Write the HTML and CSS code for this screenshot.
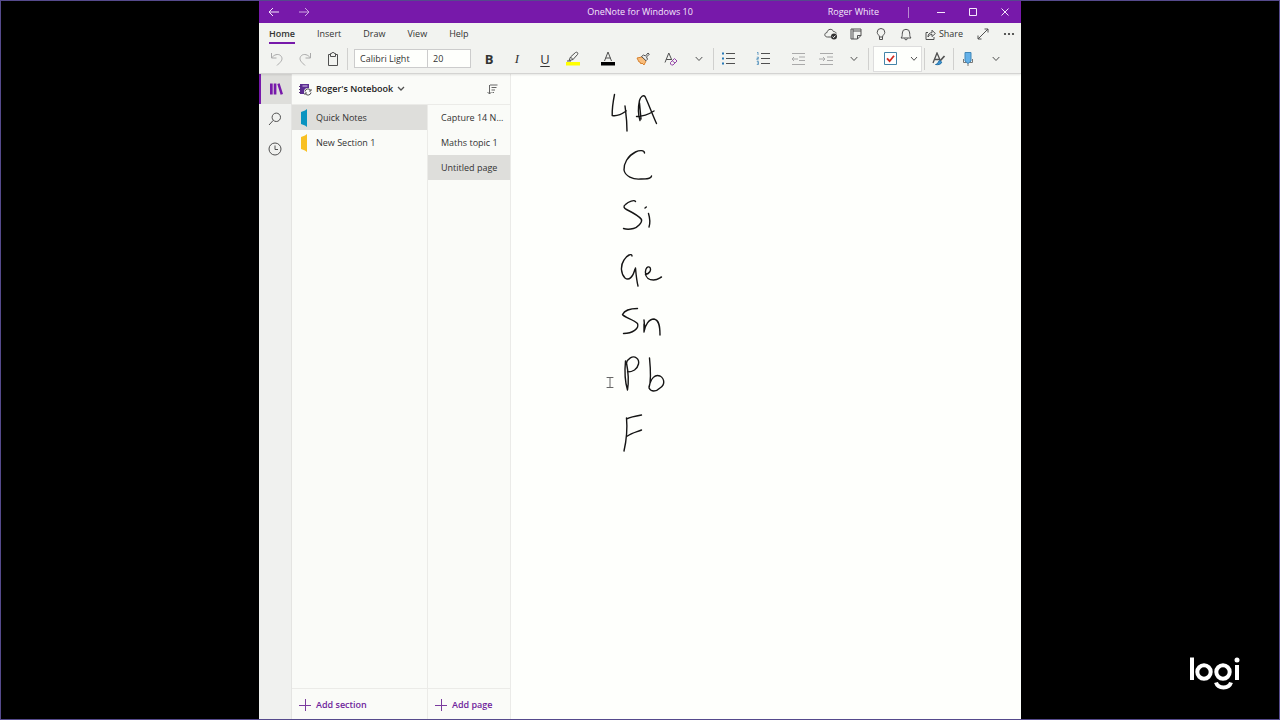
FILE: index.html
```html
<!DOCTYPE html>
<html lang="en">
<head>
<meta charset="utf-8">
<title>OneNote for Windows 10</title>
<link rel="stylesheet" href="styles.css">
</head>
<body>
<div class="stage">
<div class="app">
  <header class="titlebar">
    <div class="title-nav">
      <button aria-label="Back"><svg width="12" height="10" viewBox="0 0 12 10"><path d="M11 5H1M5 1L1 5l4 4"/></svg></button>
      <button class="faded" aria-label="Forward"><svg width="12" height="10" viewBox="0 0 12 10"><path d="M1 5h10M7 1l4 4-4 4"/></svg></button>
    </div>
    <h1 class="title">OneNote for Windows 10</h1>
    <div class="title-controls">
      <span class="user">Roger White</span>
      <span class="title-sep"></span>
      <button aria-label="Minimize"><svg width="8" height="8" viewBox="0 0 8 8"><path d="M0 4.500h8"/></svg></button>
      <button aria-label="Maximize"><svg width="8" height="8" viewBox="0 0 8 8"><path d="M.5.5h7v7h-7z"/></svg></button>
      <button aria-label="Close"><svg width="8" height="8" viewBox="0 0 8 8"><path d="M.5.5l7 7M7.500.5l-7 7"/></svg></button>
    </div>
  </header>

  <div class="ribbon">
    <div class="tabrow">
      <nav class="tabs">
        <a href="#" class="tab active">Home</a>
        <a href="#" class="tab">Insert</a>
        <a href="#" class="tab">Draw</a>
        <a href="#" class="tab">View</a>
        <a href="#" class="tab">Help</a>
      </nav>
      <div class="quick">
        <button aria-label="Sync status"><svg width="14" height="12" viewBox="0 0 14 12"><path d="M7 9H3.500C0 9 0 4.800 3 4.600 3.500.5 8.600.4 9.400 3.500c1.600 0 2.600.8 2.800 2"/><circle cx="10" cy="8.500" r="3" fill="#333" stroke="none"/><path d="M8.600 8.600l1 1 1.800-2" stroke="#fff"/></svg></button>
        <button aria-label="Feed"><svg width="12" height="12" viewBox="0 0 12 12"><path d="M1 1h10v6.500L7.500 11H1zM3 1v10M3 3h8M7.500 11V7.500H11"/></svg></button>
        <button aria-label="Tips"><svg width="10" height="13" viewBox="0 0 10 13"><path d="M3.500 9C3.500 7 1.200 6.500 1.200 4.300a3.800 3.800 0 0 1 7.600 0C8.800 6.500 6.500 7 6.500 9zM3.500 9v2.500h3V9"/></svg></button>
        <button aria-label="Notifications"><svg width="12" height="13" viewBox="0 0 12 13"><path d="M1 10c1.500-1.500 1.200-3 1.300-5a3.700 3.700 0 0 1 7.400 0c.1 2-.2 3.500 1.300 5zM4.500 10.500c.3 1.800 2.700 1.800 3 0"/></svg></button>
        <button class="share"><svg width="11" height="11" viewBox="0 0 11 11"><path d="M3 3.500H1v7h8V8M3 8c0-3 1.500-4.300 4-4.300V1.200L10.300 4.500 7 7.600V5.400C5.200 5.400 4 6.300 3 8z"/></svg>Share</button>
        <button class="expand" aria-label="Full screen"><svg width="12" height="12" viewBox="0 0 12 12"><path d="M1 11L11 1M7.500 1H11v3.500M1 7.500V11h3.500"/></svg></button>
        <button class="more" aria-label="More options"><svg width="12" height="4" viewBox="0 0 12 4"><g fill="#333" stroke="none"><circle cx="2" cy="2" r="1.100"/><circle cx="6" cy="2" r="1.100"/><circle cx="10" cy="2" r="1.100"/></g></svg></button>
      </div>
    </div>

    <div class="tools" role="toolbar" aria-label="Formatting">
      <button class="tool" aria-label="Undo" disabled><svg width="14" height="14" viewBox="0 0 14 14"><path d="M1.500 1v5h5M1.500 6C4 2.500 8 1.500 10.500 3.500 13 6 12 8.500 10 10.500L7 13.500"/></svg></button>
      <button class="tool" aria-label="Redo" disabled><svg width="14" height="14" viewBox="0 0 14 14"><path d="M12.500 1v5h-5M12.500 6C10 2.500 6 1.500 3.500 3.500 1 6 2 8.500 4 10.500L7 13.500"/></svg></button>
      <button class="tool" aria-label="Paste"><svg width="12" height="14" viewBox="0 0 12 14"><path d="M3.500 2.500h-2v11h9v-11h-2M3.500 1.500h1.200a1.300 1.300 0 0 1 2.600 0h1.200v3h-5z"/></svg></button>
      <span class="sep"></span>
      <div class="fontbox">
        <input class="font-name" type="text" value="Calibri Light" aria-label="Font">
        <input class="font-size" type="text" value="20" aria-label="Font size">
      </div>
      <button class="tool letter bold">B</button>
      <button class="tool letter italic">I</button>
      <button class="tool letter under">U</button>
      <button class="tool" aria-label="Highlight"><svg width="16" height="15" viewBox="0 0 16 15"><path d="M1 11h14v3.500H1z" fill="#ffff00" stroke="none"/><path d="M4 9.500L5.500 6 10.500 1.500c1.500-1 3 .5 2 2L8 8.500 4.500 9.500M5.500 6L8 8.500M2 10h4"/></svg></button>
      <button class="tool lead" aria-label="Font color"><svg width="16" height="15" viewBox="0 0 16 15"><path d="M1 11h14v3.500H1z" fill="#000" stroke="none"/><path d="M4.500 10L8 1l3.500 9M5.500 7h5"/></svg></button>
      <button class="tool lead" aria-label="Format painter"><svg width="14" height="14" viewBox="0 0 14 14"><path d="M1 6l5-1 4 4-2 4-2-2-1 1-1-2-1 0z" fill="#f8bd7c" stroke="#d8822f"/><path d="M5.500 4.500L7.500 3l2 1L12 1l1.300 1.200L10.500 5l1 2.200-1.500 1.500z" fill="#eee"/></svg></button>
      <button class="tool" aria-label="Clear formatting"><svg width="14" height="14" viewBox="0 0 14 14"><path d="M1 10.500L4.800 1l3 7M2.200 7.500h5"/><path d="M6.500 10.500l4-4L13 9l-4 4H7.500l-1-1zM8.300 8.800L11 11" stroke="#9447a8"/></svg></button>
      <button class="tool" aria-label="More font options"><svg width="8" height="6" viewBox="0 0 8 6"><path d="M.7 1L4 4.500 7.300 1"/></svg></button>
      <span class="sep"></span>
      <button class="tool" aria-label="Bullets"><svg width="14" height="13" viewBox="0 0 14 13"><path d="M5 1.500h9M5 6.500h9M5 11.500h9"/><path d="M1 .5h2v2H1zM1 5.500h2v2H1zM1 10.500h2v2H1z" fill="#287ab8" stroke="none"/></svg></button>
      <button class="tool lead" aria-label="Numbering"><svg width="14" height="13" viewBox="0 0 14 13"><path d="M5 1.500h9M5 6.500h9M5 11.500h9"/><path d="M1 .9L2 .2V3M.8 5.200h1.700v1.300H.9v1.400h1.700M.8 9.500h1.700v3H.8M1 11h1.500" stroke="#4b8dbb" stroke-width=".8"/></svg></button>
      <button class="tool lead" aria-label="Decrease indent" disabled><svg width="14" height="12" viewBox="0 0 14 12"><path d="M1 .5h13M8 4h6M8 7.500h6M1 11.500h13M7 6H1M3 4L1 6l2 2"/></svg></button>
      <button class="tool" aria-label="Increase indent" disabled><svg width="14" height="12" viewBox="0 0 14 12"><path d="M1 .5h13M8 4h6M8 7.500h6M1 11.500h13M0 6h6M4 4l2 2-2 2"/></svg></button>
      <button class="tool" aria-label="More paragraph options"><svg width="8" height="6" viewBox="0 0 8 6"><path d="M.7 1L4 4.500 7.300 1"/></svg></button>
      <span class="sep"></span>
      <div class="todo">
        <button class="todo-main" aria-label="To do tag"><svg width="13" height="13" viewBox="0 0 13 13"><path d="M.5.5h12v12H.5z" fill="#fff" stroke="#4384a8"/><path d="M3 6.300l2.600 2.900L10 3.800" stroke="#d02b20" stroke-width="1.800"/></svg></button>
        <button class="todo-menu" aria-label="More tags"><svg width="8" height="6" viewBox="0 0 8 6"><path d="M1 1l3 3.300L7 1"/></svg></button>
      </div>
      <span class="sep"></span>
      <button class="tool" aria-label="Styles"><svg width="14" height="14" viewBox="0 0 14 14"><path d="M1 11L5 1l3.500 8M2.500 7.500h5" stroke-width="1.300"/><path d="M12.500 4L8 9" stroke-width="1.700"/><path d="M3.500 12.500c3 0 2-3.500 4.500-4l1.800 1.700c-1 2.300-3.300 2.800-6.300 2.300z" fill="#3e94d1" stroke="#2471a8"/></svg></button>
      <span class="sep"></span>
      <button class="tool" aria-label="Dictate"><svg width="12" height="14" viewBox="0 0 12 14"><path d="M1.500 7v3.500h9V7M6 11v3" stroke="#777"/><path d="M3 .5h6V9L6 11.500 3 9z" fill="#65b1e8" stroke="#4087b8"/></svg></button>
      <button class="tool" aria-label="More dictation options"><svg width="8" height="6" viewBox="0 0 8 6"><path d="M.7 1L4 4.500 7.300 1"/></svg></button>
    </div>
  </div>

  <div class="workspace">
    <nav class="rail" aria-label="Views">
      <button class="rail-btn current" aria-label="Notebooks"><svg width="14" height="12" viewBox="0 0 14 12"><path d="M1 .5h2.700v11H1zM4.700.5h2.700v11H4.700zM8.300 1l2.300-.8L14 11l-2.400.8z" fill="#7719aa" stroke="none"/></svg></button>
      <button class="rail-btn" aria-label="Search"><svg width="14" height="14" viewBox="0 0 14 14"><circle cx="8.300" cy="5.300" r="4.200"/><path d="M5.300 8.300L1 13"/></svg></button>
      <button class="rail-btn" aria-label="Recent"><svg width="14" height="14" viewBox="0 0 14 14"><circle cx="7" cy="7" r="6"/><path d="M7 3.500V7.500h3"/></svg></button>
    </nav>

    <div class="navpane">
      <div class="notebook">
        <button class="notebook-name"><svg width="13" height="13" viewBox="0 0 13 13"><path d="M1 1h9v5L6 11H1z" fill="#5b2d91" stroke="none"/><path d="M3.500 3h5" stroke="#d8c8e8"/><path d="M0 3.500h2M0 6.500h2M0 9.500h2" stroke="#543078"/><circle cx="9" cy="9" r="4" fill="#fafafa" stroke="none"/><path d="M6 8.500a3 3 0 0 1 5.500-1.200M12 6v2h-2M12 9.500a3 3 0 0 1-5.500 1.200M6 12v-2h2"/></svg><span>Roger's Notebook</span><svg width="8" height="6" viewBox="0 0 8 6"><path d="M1 1l3 3 3-3" stroke-width="1.300"/></svg></button>
        <button class="sort" aria-label="Sort pages"><svg width="11" height="11" viewBox="0 0 11 11"><path d="M2.500 1v9M.5 8l2 2 2-2M3 1h7.500M4.500 3.500h5M4.500 6h3.500M5.500 8.500H7" stroke="#666"/></svg></button>
      </div>
      <div class="lists">
        <div class="column sections">
          <ul>
            <li><a href="#" class="row selected"><svg width="6" height="18" viewBox="0 0 6 18"><path d="M4 1.500L6 0v18l-2-1.500L0 15V3z" fill="#0a94c0" stroke="none"/></svg>Quick Notes</a></li>
            <li><a href="#" class="row"><svg width="6" height="18" viewBox="0 0 6 18"><path d="M4 1.500L6 0v18l-2-1.500L0 15V3z" fill="#f8c022" stroke="none"/></svg>New Section 1</a></li>
          </ul>
          <button class="add"><svg width="12" height="12" viewBox="0 0 12 12"><path d="M6.500 0v12M0 6.500h12"/></svg>Add section</button>
        </div>
        <div class="column pages">
          <ul>
            <li><a href="#" class="row">Capture 14 N...</a></li>
            <li><a href="#" class="row">Maths topic 1</a></li>
            <li><a href="#" class="row selected">Untitled page</a></li>
          </ul>
          <button class="add"><svg width="12" height="12" viewBox="0 0 12 12"><path d="M6.500 0v12M0 6.500h12"/></svg>Add page</button>
        </div>
      </div>
    </div>

    <main class="page">
      <svg class="ink" width="80" height="380" viewBox="600 85 80 380" role="img" aria-label="Handwritten notes: 4A, C, Si, Ge, Sn, Pb, F">
        <path d="M614.500 94.500C613 102 612 109 612.200 115.500c4 1 9-1 14-4.500M625 106c1 8 2 14 2 25"/>
        <path d="M640 120.500c-2-6-2-13-.5-20 1-4 4-6 5.500-4 3 6 7 17 11.500 27M636.500 116.500c6 0 12-2 17.500-5.500M641 119l-1.500-16"/>
        <path d="M644.500 153c0-3-5-3-9-1-8 4-12 12-11.500 18 1 6 9 10 17 9 6 0 10 0 10.500-3"/>
        <path d="M635.500 201.500c-1-2-7 0-10 3-3 2-1 4 1 5 6 3 13 7 15 10 1 3-4 8-8 9-4 1-7 1-10 0M648.500 213.500c1.500 5 2 9 .5 13.500M645 208l1.300-1"/>
        <path d="M632 256c0-3-5-1-8 4-4 6-3 14 1 18 4 3 8-1 10-9M635.500 268c.5 6 1 12 2.500 18M645.500 274.500c4-1 6-4 4.500-7-2-2-5 1-4.500 5.500 0 5 4 7 8 7 4 0 6-2 8-3"/>
        <path d="M637.500 308.500c-7 0-13 2-15 6 2 3 11 5 15 9 2 5-5 10-14 10M644 320c1 5 .5 9 0 12 1-7 5-13 10-13 5 1 6 7 6 16M644 331v-7"/>
        <path d="M625.500 361c-1 10-1 19 2 29 1-6 1-17-1-27 1-4 6-8 10-5 4 3 2 9-2 12-3 2-5 2-7 2M649.500 358c1 10 2 22-.5 30M649 387c2-9 6-13 11-11 5 3 5 9 0 12-4 4-9 4-11 0"/>
        <path d="M626.500 418c1 11 0 22-2.500 33M626.500 419c4-2 9-3 15-4M627.500 436c4-3 9-4 14-6"/>
        <path class="ibeam" d="M607 377.500h6M610 377.500v10M607 387.500h6"/>
      </svg>
    </main>
  </div>
</div>

<svg class="logi" width="52" height="36" viewBox="1188 656 52 36" role="img" aria-label="logi">
  <path d="M1192 657.500V680M1237 665v15"/>
  <circle cx="1204" cy="672" r="6.700"/>
  <circle cx="1223" cy="672" r="6.700"/>
  <path d="M1216 682.500c2 6.500 13 6.500 15 0"/>
  <circle class="dot" cx="1237" cy="660" r="2.500"/>
</svg>
</div>
</body>
</html>
```
FILE: styles.css
```css
* { box-sizing: border-box; }

body {
  margin: 0;
  background: #000;
  color: #333;
  font: 9px/16px "Open Sans", "Noto Sans", sans-serif;
}

button {
  display: flex;
  align-items: center;
  justify-content: center;
  padding: 0;
  border: 0;
  background: none;
  color: inherit;
  font: inherit;
}

a { color: inherit; text-decoration: none; }
ul { margin: 0; padding: 0; list-style: none; }

svg {
  flex: none;
  fill: none;
  stroke: #505050;
  stroke-width: 1;
}

.stage {
  position: relative;
  display: grid;
  grid-template-columns: 258fr 762fr 258fr;
  min-height: 100vh;
  border: 1px solid #554a8c;
}

.app {
  grid-column: 2;
  display: flex;
  flex-direction: column;
  min-width: 0;
  background: #fefffc;
}

/* Title bar */
.titlebar {
  display: grid;
  grid-template-columns: 1fr auto 1fr;
  align-items: center;
  height: 22px;
  background: #7719aa;
  color: #f5e8fb;
}
.titlebar svg { stroke: #f5e8fb; }
.title-nav { display: flex; }
.title-nav button { width: 30px; }
.faded { opacity: 0.7; }
.title { margin: 0; font-size: 9px; font-weight: 400; }
.title-controls { display: flex; align-items: center; justify-content: flex-end; }
.title-controls button { width: 32px; height: 22px; }
.title-sep { width: 1px; height: 11px; margin: 0 16px 0 29px; background: #b98bd0; }

/* Ribbon */
.ribbon {
  height: 51px;
  border-bottom: 1px solid #d4d4d2;
  background: #f2f3f0;
  box-shadow: 0 1px 2px rgba(0, 0, 0, 0.1);
  z-index: 1;
}
.tabrow { display: flex; justify-content: space-between; height: 21px; padding-left: 10px; }
.tabs { display: flex; gap: 22px; }
.tab { padding-top: 3px; border-bottom: 2px solid transparent; }
.tab.active { border-color: #7719aa; font-weight: 600; }
.quick { display: flex; align-items: center; padding-top: 1px; }
.quick button { width: 25px; }
.quick .share { width: 52px; gap: 3px; }
.quick .expand { width: 26px; }

.tools { display: flex; align-items: center; height: 29px; padding-left: 4px; }
.tool { width: 28px; height: 26px; }
.tool:disabled svg { stroke: #aaa; }
.lead { margin-left: 7px; }
.letter { font-size: 13px; }
.bold { font-weight: 700; }
.italic { font-family: "Liberation Serif", serif; font-style: italic; }
.under { text-decoration: underline; text-underline-offset: 2px; }
.sep { width: 1px; height: 22px; background: #d0d0ce; }
.fontbox { display: flex; margin: 0 4px 0 6px; border: 1px solid #ccc; }
.fontbox input {
  height: 17px;
  padding: 0 5px;
  border: 0;
  background: #fefffc;
  color: #333;
  font: 9px/16px "Open Sans", sans-serif;
}
.fontbox .font-name { width: 73px; border-right: 1px solid #ccc; }
.fontbox .font-size { width: 42px; }
.todo {
  display: flex;
  height: 26px;
  margin: 0 2px 0 4px;
  border: 1px solid #ddd;
  background: #fefffc;
}
.todo-main { width: 32px; }
.todo-menu { width: 15px; }

/* Workspace */
.workspace { display: flex; flex: 1; }
.rail { width: 33px; border-right: 1px solid #e4e4e2; background: #f0f1ef; }
.rail-btn { width: 100%; height: 30px; }
.rail-btn.current { border-left: 2px solid #7719aa; background: #dededb; }

.navpane {
  display: flex;
  flex-direction: column;
  width: 219px;
  border-right: 1px solid #ebebe8;
  background: #fafbf8;
}
.notebook {
  display: flex;
  justify-content: space-between;
  height: 31px;
  padding: 0 12px 0 7px;
  border-bottom: 1px solid #ebebe8;
}
.notebook-name { gap: 4px; color: #222; font-weight: 600; }
.lists { display: flex; flex: 1; }
.column { display: flex; flex-direction: column; justify-content: space-between; }
.sections { width: 136px; border-right: 1px solid #ebebe8; }
.pages { flex: 1; }
.row { display: flex; align-items: center; gap: 9px; height: 25px; padding-left: 9px; white-space: nowrap; }
.pages .row { padding-left: 13px; }
.selected { background: #dededb; }
.add {
  justify-content: flex-start;
  gap: 5px;
  height: 31px;
  padding: 1px 0 0 7px;
  border-top: 1px solid #ebebe8;
  color: #6f1f9c;
  font-weight: 600;
}
.add svg { stroke: #7a3b9e; }

.page { flex: 1; min-width: 0; padding: 11px 0 0 89px; }
.ink { display: block; stroke: #151515; stroke-width: 1.4; stroke-linecap: round; stroke-linejoin: round; }
.ink .ibeam { stroke: #666; stroke-width: 1; }

.logi { position: absolute; right: 39px; bottom: 27px; stroke: #fff; stroke-width: 4; }
.logi .dot { fill: #fff; stroke: none; }
```
